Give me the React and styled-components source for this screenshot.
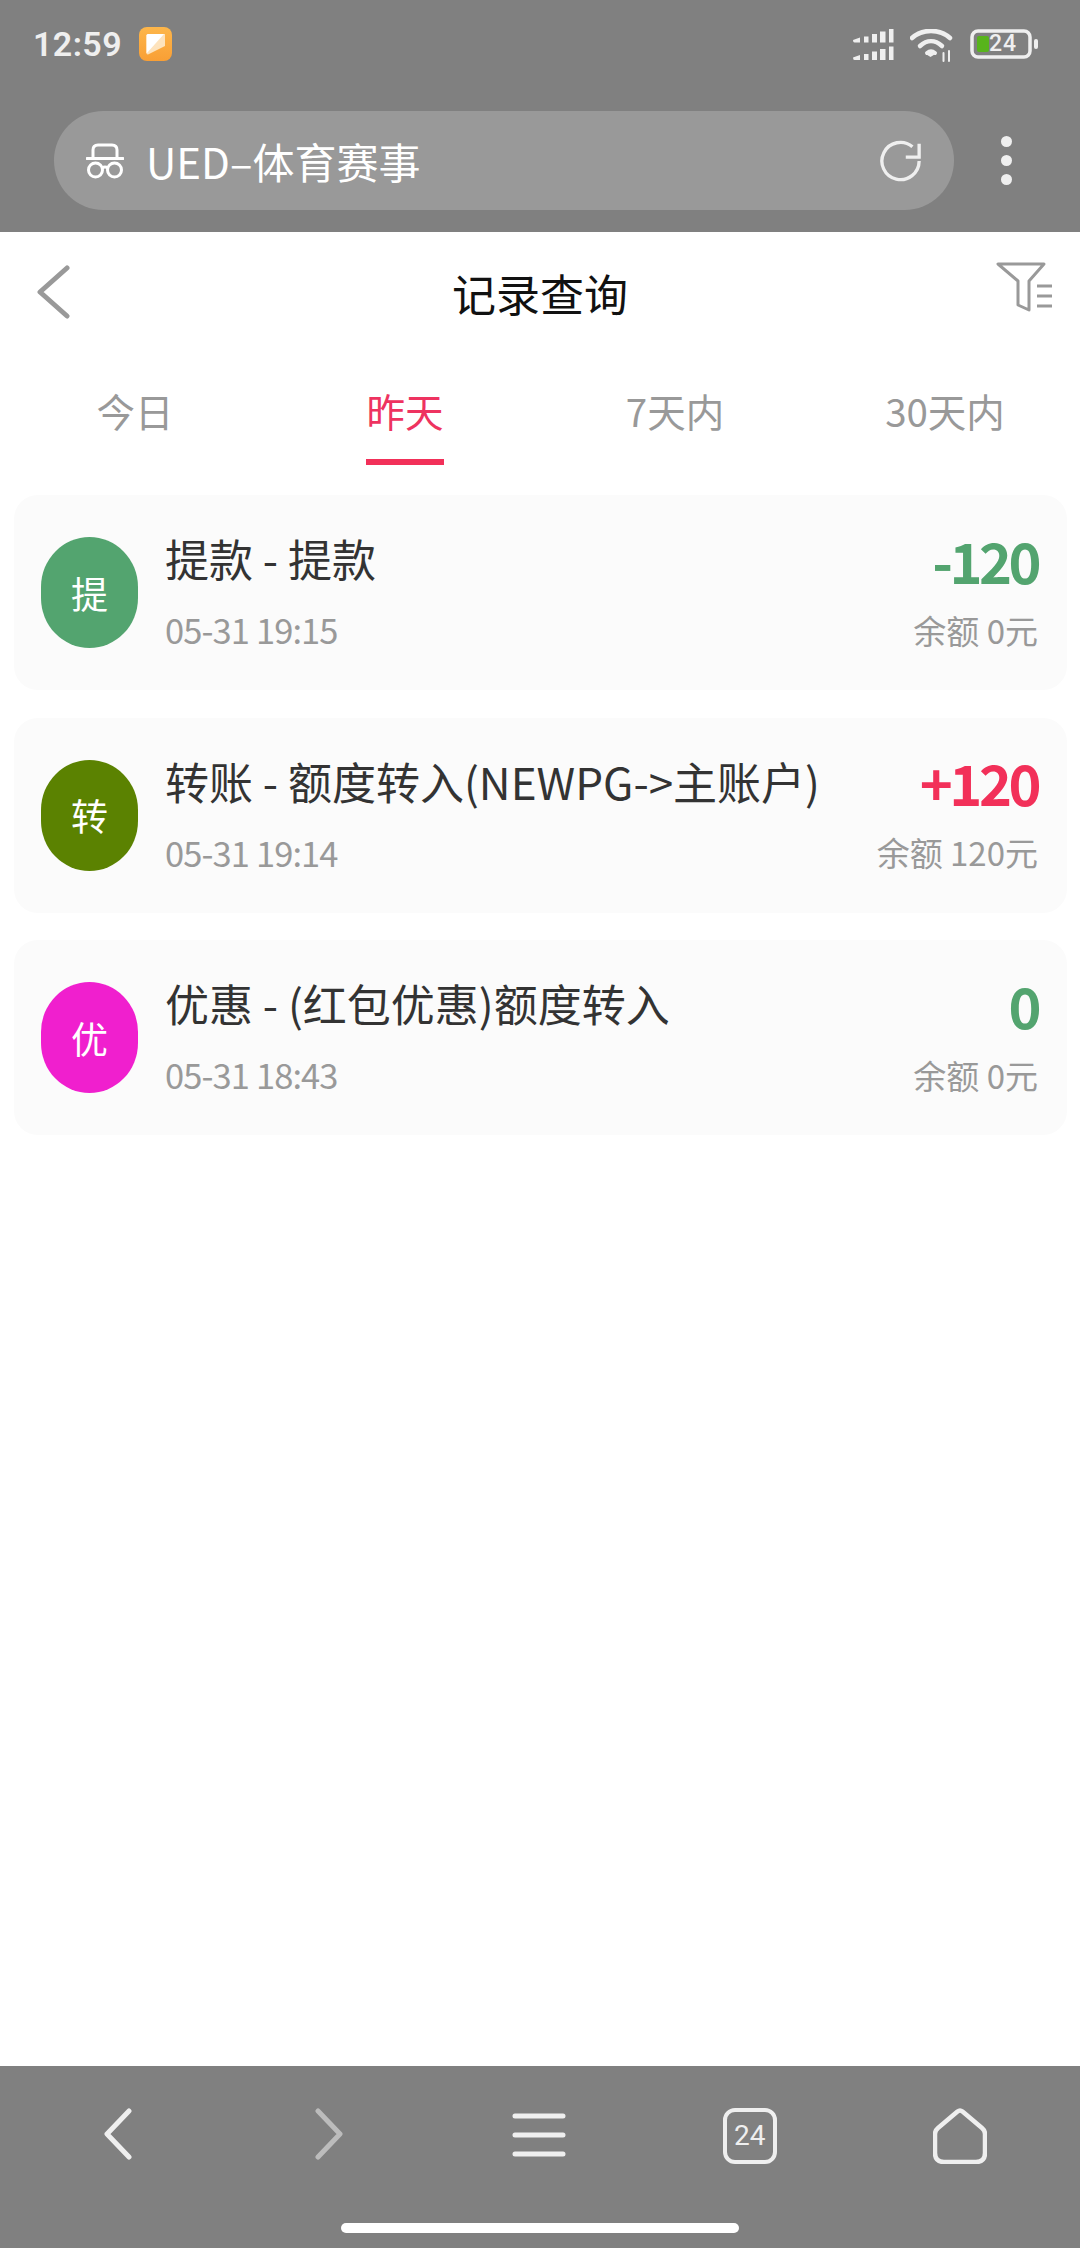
import React from "react";
import styled, { createGlobalStyle } from "styled-components";

const Global = createGlobalStyle`
  html, body { margin: 0; padding: 0; background: #fff; }
  * { box-sizing: border-box; }
  body { font-family: "Noto Sans CJK SC", "Noto Sans", sans-serif; }
`;

const Page = styled.div`
  width: 1080px; height: 2248px; display: flex; flex-direction: column; background: #fff; overflow: hidden;
`;
const TopChrome = styled.div`
  height: 232px; background: #808080; display: flex; flex-direction: column; flex: none;
`;
const StatusBar = styled.div`
  height: 111px; padding: 26px 42px 0 33px; display: flex; align-items: flex-start; justify-content: space-between;
`;
const StatusLeft = styled.div`display: flex; align-items: center; gap: 17px; height: 36px;`;
const Time = styled.span`
  font-family: Roboto, sans-serif; font-weight: 600; font-size: 34px; line-height: 36px; color: #efefef; letter-spacing: 0.4px;
`;
const StatusRight = styled.div`display: flex; align-items: flex-start; gap: 16px; padding-top: 3px;`;
const AddressRow = styled.div`
  display: flex; align-items: center; padding-left: 54px; height: 99px;
`;
const Pill = styled.div`
  width: 900px; height: 99px; border-radius: 50px; background: #999; display: flex; align-items: center; padding: 0 32px 0 32px;
`;
const UrlText = styled.span`
  flex: 1; margin-left: 22px; font-size: 42px; line-height: 99px; color: #fff; font-weight: 400; white-space: nowrap;
`;
const MoreButton = styled.div`
  margin-left: 47px; display: flex; flex-direction: column; gap: 8px;
`;
const Dot = styled.span`width: 11px; height: 11px; border-radius: 50%; background: #efefef; display: block;`;

const Header = styled.header`
  height: 119px; flex: none; display: flex; align-items: center; justify-content: space-between; padding: 0 28px 0 36px; position: relative;
`;
const FilterButton = styled.div`margin-bottom: 8px; display: flex;`;
const PageTitle = styled.h1`
  position: absolute; left: 0; right: 0; top: 33px; margin: 0; text-align: center; font-size: 44px; line-height: 56px; font-weight: 400; color: #111;
`;
const Tabs = styled.nav`display: grid; grid-template-columns: repeat(4, 270px); height: 144px; flex: none; `;
const Tab = styled.div`
  display: flex; flex-direction: column; align-items: center; padding-top: 31px;
`;
const TabLabel = styled.span`
  font-size: 38.500px; line-height: 56px; color: ${p => (p.$active ? "#ee3360" : "#999")};
  padding-bottom: 21px; border-bottom: 6px solid ${p => (p.$active ? "#f23059" : "transparent")};
`;
const List = styled.main`
  flex: 1; padding: 0 13px 0 14px; display: flex; flex-direction: column; gap: 27.500px;
`;
const Card = styled.article`
  height: 195px; flex: none; border-radius: 24px; background: #fbfbfb; display: flex; align-items: center; padding: 0 29px 0 27px;
`;
const Avatar = styled.div`
  width: 97px; height: 111px; border-radius: 48.500px / 50px; background: ${p => p.$color}; color: #fff; font-size: 37px;
  display: flex; align-items: center; justify-content: center; flex: none;
`;
const Info = styled.div`flex: 1; margin-left: 27px; min-width: 0; padding-top: 5px;`;
const Title = styled.div`font-size: 44px; line-height: 62px; color: #333; margin-top: -10px; white-space: nowrap;`;
const Meta = styled.div`font-size: 34.500px; line-height: 48px; color: #999; margin-top: 16px; white-space: nowrap; letter-spacing: -0.9px;`;
const Amounts = styled.div`display: flex; flex-direction: column; align-items: flex-end; flex: none; padding-top: 5px;`;
const Amount = styled.div`
  font-size: 56px; line-height: 62px; font-weight: 700; color: ${p => p.$color}; margin-top: -8px; letter-spacing: -3.500px;
`;
const Balance = styled.div`font-size: 33px; line-height: 48px; color: #999; margin-top: 15px; white-space: nowrap;`;

const BottomBar = styled.footer`
  height: 182px; background: #808080; flex: none; display: flex; flex-direction: column; align-items: center;
`;
const BottomIcons = styled.div`
  width: 100%; height: 157px; display: grid; grid-template-columns: repeat(5, 210.500px); padding-left: 13px; padding-top: 42px;
`;
const IconCell = styled.div`display: flex; justify-content: center; align-items: flex-start; position: relative;`;
const TabCount = styled.span`
  position: absolute; left: 50%; top: 14px; transform: translateX(-50%); font-family: Roboto, sans-serif; font-size: 28px; line-height: 28px; color: #efefef;
`;
const HomeIndicator = styled.div`width: 398px; height: 10px; border-radius: 5px; background: #fff;`;
const BatteryWrap = styled.div`position: relative; width: 68px; height: 30px;`;
const BatteryText = styled.span`
  position: absolute; left: 19px; top: 0; font-family: Roboto, sans-serif; font-size: 23px; line-height: 30px; font-weight: 500; color: #efefef; letter-spacing: 1px;
`;

const records = [
  { a: "提", c: "#53a46f", t: "提款 - 提款", d: "05-31 19:15", m: "-120", mc: "#53a46f", b: "余额 0元" },
  { a: "转", c: "#5b8201", t: "转账 - 额度转入(NEWPG->主账户)", d: "05-31 19:14", m: "+120", mc: "#f23059", b: "余额 120元" },
  { a: "优", c: "#f01fce", t: "优惠 - (红包优惠)额度转入", d: "05-31 18:43", m: "0", mc: "#53a46f", b: "余额 0元" },
];
const tabs = ["今日", "昨天", "7天内", "30天内"];

const NoteIcon = () => (
  <svg width="34" height="34" viewBox="0 0 34 34">
    <defs><linearGradient id="g" x1="0" y1="0" x2="0" y2="1"><stop offset="0" stopColor="#fdb64a" /><stop offset="1" stopColor="#f99f35" /></linearGradient></defs>
    <rect width="33" height="34" rx="8" fill="url(#g)" />
    <path d="M7.500 8.500q0-1.500 1.500-1.500h17v12L9 27.500q-1.500 0-1.500-1.500z" fill="#fde3bd" />
    <path d="M7.500 26.500V8.500q0-1.500 1.500-1.500h16z" fill="#fff" />
  </svg>
);
const Signal = () => (
  <svg width="41" height="32" viewBox="0 0 41 32" fill="#efefef">
    <path d="M0 11l7-2.500v5H1.500Q0 13.500 0 11zM11 7.500h4.500v6H11zM19 5h5v8.500h-5zM27 2.500h5.500v11H27zM36 0h4.500v13.500H36z" />
    <path d="M0 28.500l7-2.500v5H1.500Q0 31 0 28.500zM11 25h4.500v6H11zM19 22.500h5V31h-5zM27 20h5.500v11H27zM36 17.500h4.500V31H36z" />
  </svg>
);
const Wifi = () => (
  <svg width="44" height="33" viewBox="0 0 44 33" fill="none" stroke="#efefef" strokeLinecap="round">
    <path d="M2 9C12 -0.500 30 -0.500 40 9" strokeWidth="4.500" />
    <path d="M10 17C17 10.500 25 10.500 32 17" strokeWidth="4.500" />
    <path d="M17 24c2.500-2 5.500-2 8 0" strokeWidth="4" />
    <path d="M20.500 23l4 2.500-4 2.500-4-2.500z" fill="#efefef" stroke="none" />
    <path d="M33.500 24v8M39 22v10" strokeWidth="2" />
  </svg>
);
const Battery = () => (
  <BatteryWrap>
    <svg width="68" height="30" viewBox="0 0 68 30">
      <rect x="2" y="2" width="58" height="26" rx="6" fill="none" stroke="#efefef" strokeWidth="3.500" />
      <rect x="7" y="7" width="12" height="16" rx="2" fill="#58b41c" />
      <rect x="64" y="10" width="4" height="10" rx="2" fill="#efefef" />
    </svg>
    <BatteryText>24</BatteryText>
  </BatteryWrap>
);
const Incognito = () => (
  <svg width="38" height="36" viewBox="0 0 38 36" fill="none" stroke="#fff" strokeWidth="3">
    <path d="M7 15V7q0-5 5-5h14q5 0 5 5v8" />
    <path d="M1 15.500h36" strokeLinecap="round" />
    <circle cx="9.500" cy="27" r="7" />
    <circle cx="28.500" cy="27" r="7" />
    <path d="M16 25q3-2 6 0" />
  </svg>
);
const Reload = () => (
  <svg width="42" height="42" viewBox="0 0 44 44" fill="none" stroke="#efefef" strokeWidth="3.500">
    <path d="M41 22A19.500 19.500 0 1 1 34 7" />
    <path d="M41 4v14H27" strokeLinejoin="miter" />
  </svg>
);
const BackArrow = () => (
  <svg width="34" height="54" viewBox="0 0 34 54" fill="none" stroke="#999" strokeWidth="5" strokeLinecap="round" strokeLinejoin="round">
    <path d="M31 3L4 27l27 24" />
  </svg>
);
const Filter = () => (
  <svg width="56" height="52" viewBox="0 0 56 52" fill="none" stroke="#999" strokeWidth="3" strokeLinejoin="round">
    <path d="M2 2h46L33 19v29l-11-5V19z" />
    <path d="M41 24h15M41 34h15M41 44h15" />
  </svg>
);
const NavBack = () => (
  <svg width="30" height="52" viewBox="0 0 30 52" fill="none" stroke="#efefef" strokeWidth="5" strokeLinecap="round" strokeLinejoin="round">
    <path d="M26 3L4 26l22 23" />
  </svg>
);
const NavForward = () => (
  <svg width="30" height="52" viewBox="0 0 30 52" fill="none" stroke="#bcbcbc" strokeWidth="5" strokeLinecap="round" strokeLinejoin="round">
    <path d="M4 3l22 23L4 49" />
  </svg>
);
const MenuSvg = styled.svg`margin-top: 3px;`;
const Menu = () => (
  <MenuSvg width="54" height="48" viewBox="0 0 54 48" fill="none" stroke="#efefef" strokeWidth="5" strokeLinecap="round">
    <path d="M3 5h48M3 24h48M3 43h48" />
  </MenuSvg>
);
const TabsIcon = () => (
  <svg width="54" height="56" viewBox="0 0 54 56" fill="none" stroke="#efefef" strokeWidth="4">
    <rect x="2" y="2" width="50" height="52" rx="10" />
  </svg>
);
const Home = () => (
  <svg width="54" height="56" viewBox="0 0 54 56" fill="none" stroke="#efefef" strokeWidth="4.500" strokeLinejoin="round">
    <path d="M24.500 3.500a4 4 0 0 1 5 0L49 20q3 2.500 3 6v19q0 9-9 9H11q-9 0-9-9V26q0-3.500 3-6z" />
  </svg>
);

export default function App() {
  return (
    <Page>
      <Global />
      <TopChrome>
        <StatusBar>
          <StatusLeft>
            <Time>12:59</Time>
            <NoteIcon />
          </StatusLeft>
          <StatusRight>
            <Signal />
            <Wifi />
            <Battery />
          </StatusRight>
        </StatusBar>
        <AddressRow>
          <Pill>
            <Incognito />
            <UrlText>UED–体育赛事</UrlText>
            <Reload />
          </Pill>
          <MoreButton><Dot /><Dot /><Dot /></MoreButton>
        </AddressRow>
      </TopChrome>
      <Header>
        <BackArrow />
        <PageTitle>记录查询</PageTitle>
        <FilterButton><Filter /></FilterButton>
      </Header>
      <Tabs>
        {tabs.map((t, i) => (
          <Tab key={t}><TabLabel $active={i === 1}>{t}</TabLabel></Tab>
        ))}
      </Tabs>
      <List>
        {records.map(r => (
          <Card key={r.d}>
            <Avatar $color={r.c}>{r.a}</Avatar>
            <Info>
              <Title>{r.t}</Title>
              <Meta>{r.d}</Meta>
            </Info>
            <Amounts>
              <Amount $color={r.mc}>{r.m}</Amount>
              <Balance>{r.b}</Balance>
            </Amounts>
          </Card>
        ))}
      </List>
      <BottomBar>
        <BottomIcons>
          <IconCell><NavBack /></IconCell>
          <IconCell><NavForward /></IconCell>
          <IconCell><Menu /></IconCell>
          <IconCell><TabsIcon /><TabCount>24</TabCount></IconCell>
          <IconCell><Home /></IconCell>
        </BottomIcons>
        <HomeIndicator />
      </BottomBar>
    </Page>
  );
}
